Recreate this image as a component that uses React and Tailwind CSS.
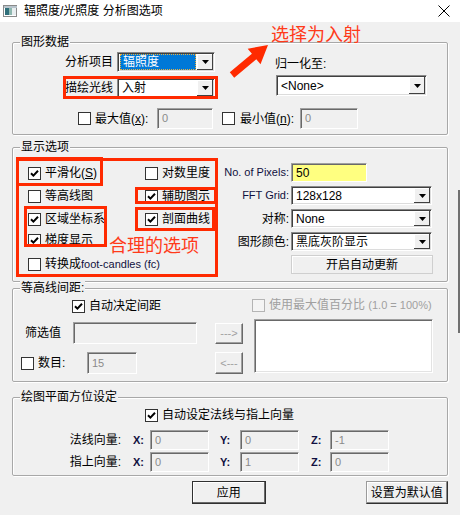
import React from 'react';

const RED = 'border-[#ff2a00]';

const Check = ({ checked, disabled }) => (
  <span
    className={`flex items-center justify-center w-[13px] h-[13px] shrink-0 border ${
      disabled ? 'border-[#b4b4b4] bg-[#f4f4f4]' : 'border-[#333] bg-white'
    }`}
  >
    {checked && (
      <svg width="9" height="9" viewBox="0 0 9 9">
        <path d="M1 4.2 L3.4 6.6 L8 1.8" stroke="#000" strokeWidth="2" fill="none" />
      </svg>
    )}
  </span>
);

const CheckRow = ({ checked, disabled, children, className = '' }) => (
  <div className={`flex items-center h-[16px] ${className}`}>
    <Check checked={checked} disabled={disabled} />
    <span className={`ml-[4px] leading-[16px] whitespace-nowrap ${disabled ? 'text-[#a0a0a0]' : ''}`}>{children}</span>
  </div>
);

const DropBtn = () => (
  <div className="flex items-center justify-center w-[16px] bg-[#f0f0f0] shadow-[inset_-1px_-1px_0_#404040,inset_1px_1px_0_#fff]">
    <svg width="7" height="4" viewBox="0 0 7 4">
      <path d="M0 0 H7 L3.5 4 Z" fill="#000" />
    </svg>
  </div>
);

const Select = ({ value, className = '', hl, latin }) => (
  <div
    className={`flex bg-white border border-[#8a8a8a] border-b-white border-r-white shadow-[inset_1px_1px_0_#404040,inset_-1px_-1px_0_#dcdcdc] p-[1px] ${className}`}
  >
    <div className="flex-1 flex items-center overflow-hidden whitespace-nowrap pl-[1px] pr-[1px]">
      {hl ? (
        <span className="flex items-center h-full w-full bg-[#0078d7] text-white pl-[2px] border border-dotted border-[#e8b040]">
          {value}
        </span>
      ) : (
        <span className={`pl-[2px] ${latin ? 'text-[12px]' : ''}`}>{value}</span>
      )}
    </div>
    <DropBtn />
  </div>
);

const Field = ({ value, className = '', yellow }) => (
  <div
    className={`flex items-center border border-[#a0a0a0] border-b-white border-r-white shadow-[inset_1px_1px_0_#696969] pl-[4px] text-[11px] ${
      yellow ? 'bg-[#ffff80] text-black text-[12px]' : 'bg-[#f0f0f0] text-[#8a8a8a]'
    } ${className}`}
  >
    {value}
  </div>
);

const SmallBtn = ({ children, className = '' }) => (
  <div
    className={`flex items-center justify-center bg-[#f0f0f0] border border-white border-b-[#696969] border-r-[#696969] shadow-[inset_-1px_-1px_0_#a0a0a0] text-[#a0a0a0] text-[11px] ${className}`}
  >
    {children}
  </div>
);

const Group = ({ title, className = '', children }) => (
  <div className={`border border-[#a8a8a8] rounded-[2px] shadow-[inset_1px_1px_0_#fff,1px_1px_0_#fff] ${className}`}>
    <div className="-mt-[9px] ml-[7px] px-[1px] w-fit bg-[#f0f0f0] leading-[16px]">{title}</div>
    {children}
  </div>
);

const Box = ({ className }) => <div className={`absolute border-[3px] ${RED} ${className}`} />;

export default function App() {
  return (
    <div className="relative w-[460px] h-[515px] bg-[#f0f0f0] overflow-hidden text-[12px] text-black font-['Liberation_Sans','Noto_Sans_CJK_SC',sans-serif]">
      {/* title bar */}
      <div className="flex items-center h-[22px] bg-white">
        <svg className="ml-[3px]" width="14" height="12" viewBox="0 0 14 12">
          <rect x="0.5" y="0.5" width="13" height="11" fill="#fff" stroke="#8a8a8a" />
          <rect x="1" y="1" width="13" height="2" fill="#b8c4cc" />
          <rect x="2" y="3" width="4" height="7" fill="#2f6f7a" />
          <rect x="6" y="3" width="3" height="7" fill="#8fb8b0" />
          <rect x="9" y="3" width="4" height="7" fill="#e8eef0" />
        </svg>
        <span className="ml-[7px] leading-[16px]">辐照度/光照度 分析图选项</span>
        <svg className="ml-auto mr-[10px]" width="12" height="12" viewBox="0 0 12 12">
          <path d="M0.5 0.5 L11.5 11.5 M11.5 0.5 L0.5 11.5" stroke="#000" strokeWidth="1" />
        </svg>
      </div>

      <div className="px-[12px]">
        {/* 图形数据 */}
        <Group title="图形数据" className="mt-[20px] h-[93px]">
          <div className="flex mt-[2px]">
            <div className="w-[203px]">
              <div className="flex items-center h-[20px]">
                <span className="w-[100px] text-right">分析项目</span>
                <Select value="辐照度" hl className="ml-[4px] w-[98px] h-[20px]" />
              </div>
              <div className="flex items-center h-[20px] mt-[6px]">
                <span className="w-[100px] text-right">描绘光线</span>
                <Select value="入射" className="ml-[4px] w-[98px] h-[20px]" />
              </div>
            </div>
            <div className="ml-[59px]">
              <div className="mt-[4px] leading-[16px]">归一化至:</div>
              <Select value="<None>" latin className="mt-[3px] ml-[1px] w-[151px] h-[21px]" />
            </div>
          </div>
          <div className="flex items-center h-[21px] mt-[10px] pl-[65px]">
            <Check />
            <span className="ml-[4px] w-[58px] whitespace-nowrap">
              最大值(<u>x</u>):
            </span>
            <Field value="0" className="ml-[4px] w-[56px] h-[21px]" />
            <span className="ml-[9px]" />
            <Check />
            <span className="ml-[5px] w-[56px] whitespace-nowrap">
              最小值(<u>n</u>):
            </span>
            <Field value="0" className="ml-[4px] w-[58px] h-[21px]" />
          </div>
        </Group>

        {/* 显示选项 */}
        <Group title="显示选项" className="mt-[12px] h-[135px]">
          <div className="flex">
            <div className="w-[200px] pl-[15px] mt-[10px]">
              <div className="flex">
                <CheckRow checked className="w-[117px]">
                  平滑化(<u>S</u>)
                </CheckRow>
                <CheckRow>对数里度</CheckRow>
              </div>
              <div className="flex mt-[7px]">
                <CheckRow className="w-[117px]">等高线图</CheckRow>
                <CheckRow checked>辅助图示</CheckRow>
              </div>
              <div className="flex mt-[7px]">
                <CheckRow checked className="w-[117px]">
                  区域坐标系
                </CheckRow>
                <CheckRow checked>剖面曲线</CheckRow>
              </div>
              <CheckRow checked className="mt-[5px]">
                梯度显示
              </CheckRow>
              <CheckRow className="mt-[8px]">
                转换成<span className="text-[11px] text-[#101040]">foot-candles (fc)</span>
              </CheckRow>
            </div>
            <div className="grid grid-cols-[76px_auto] gap-x-[2px] gap-y-[4px] mt-[8px] items-center">
              <span className="text-right text-[11px] text-[#101040] whitespace-nowrap">No. of Pixels:</span>
              <Field value="50" yellow className="w-[76px] h-[19px]" />
              <span className="text-right text-[11px] text-[#101040]">FFT Grid:</span>
              <Select value="128x128" latin className="w-[141px] h-[19px]" />
              <span className="text-right">对称:</span>
              <Select value="None" latin className="w-[141px] h-[19px]" />
              <span className="text-right">图形颜色:</span>
              <Select value="黑底灰阶显示" className="w-[141px] h-[19px]" />
              <span />
              <div className="flex items-center justify-center w-[142px] h-[19px] border border-[#cfcfcf] shadow-[inset_1px_1px_0_#fff]">
                开启自动更新
              </div>
            </div>
          </div>
        </Group>

        {/* 等高线间距 */}
        <Group title="等高线间距:" className="mt-[6px] h-[94px]">
          <div className="flex">
            <div className="w-[239px]">
              <CheckRow checked className="mt-[2px] ml-[59px]">
                自动决定间距
              </CheckRow>
              <div className="flex items-center h-[22px] mt-[8px]">
                <span className="w-[60px] pl-[12px]">筛选值</span>
                <Field value="" className="w-[124px] h-[22px]" />
                <SmallBtn className="ml-[18px] w-[28px] h-[21px]">---&gt;</SmallBtn>
              </div>
              <div className="flex items-center h-[22px] mt-[8px]">
                <span className="ml-[8px]" />
                <Check />
                <span className="ml-[4px] w-[49px]">数目:</span>
                <Field value="15" className="w-[50px] h-[22px]" />
                <SmallBtn className="ml-[78px] w-[28px] h-[22px]">&lt;---</SmallBtn>
              </div>
            </div>
            <div>
              <CheckRow disabled className="mt-[1px]">
                使用最大值百分比 <span className="text-[11px]">(1.0 = 100%)</span>
              </CheckRow>
              <div className="mt-[6px] ml-[2px] w-[179px] h-[54px] bg-white border border-[#a0a0a0] border-b-white border-r-white shadow-[inset_1px_1px_0_#696969,inset_-1px_-1px_0_#e3e3e3]" />
            </div>
          </div>
        </Group>

        {/* 绘图平面方位设定 */}
        <Group title="绘图平面方位设定" className="mt-[15px] h-[79px]">
          <CheckRow checked className="mt-[2px] ml-[132px]">
            自动设定法线与指上向量
          </CheckRow>
          {[
            ['法线向量:', '0', '0', '-1', 'mt-[7px]'],
            ['指上向量:', '0', '1', '0', 'mt-[2px]'],
          ].map(([label, x, y, z, mt]) => (
            <div key={label} className={`flex items-center h-[20px] ${mt}`}>
              <span className="w-[108px] text-right">{label}</span>
              <span className="ml-[12px] w-[17px] text-[11px] font-bold text-[#101040]">X:</span>
              <Field value={x} className="w-[59px] h-[20px]" />
              <span className="ml-[11px] w-[20px] text-[11px] font-bold text-[#101040]">Y:</span>
              <Field value={y} className="w-[59px] h-[20px]" />
              <span className="ml-[12px] w-[19px] text-[11px] font-bold text-[#101040]">Z:</span>
              <Field value={z} className="w-[59px] h-[20px]" />
            </div>
          ))}
        </Group>

        {/* buttons */}
        <div className="flex mt-[5px]">
          <div className="flex items-center justify-center ml-[180px] w-[74px] h-[23px] bg-[#f0f0f0] border border-[#303030] shadow-[inset_-1px_-1px_0_#696969,inset_1px_1px_0_#fff]">
            应用
          </div>
          <div className="flex items-center justify-center ml-[100px] w-[83px] h-[23px] bg-[#f0f0f0] border border-[#9a9a9a] border-b-[#303030] border-r-[#303030] shadow-[inset_-1px_-1px_0_#8a8a8a,inset_1px_1px_0_#fff]">
            设置为默认值
          </div>
        </div>
      </div>

      {/* window edge */}
      <div className="absolute left-[458px] top-[190px] w-[2px] h-[143px] bg-[#707070]" />

      {/* annotations */}
      <Box className="left-[63px] top-[76px] w-[155px] h-[23px]" />
      <Box className="left-[16px] top-[158px] w-[202px] h-[119px]" />
      <Box className="left-[16px] top-[157px] w-[87px] h-[29px]" />
      <Box className="left-[135px] top-[187px] w-[82px] h-[17px]" />
      <Box className="left-[24px] top-[206px] w-[83px] h-[41px]" />
      <Box className="left-[135px] top-[207px] w-[80px] h-[24px]" />
      <div className="absolute left-[271px] top-[22px] text-[18px] leading-[22px] text-[#ff3a1a] font-['Noto_Sans_CJK_SC',sans-serif]">
        选择为入射
      </div>
      <div className="absolute left-[109px] top-[233px] text-[18px] leading-[22px] text-[#ff3a1a] font-['Noto_Sans_CJK_SC',sans-serif]">
        合理的选项
      </div>
      <svg className="absolute left-[222px] top-[38px]" width="56" height="52" viewBox="0 0 56 52">
        <polygon
          points="46,7 38.5,26.2 34.3,21.2 12.2,39.7 7.8,34.3 29.9,15.8 25.7,10.8"
          fill="#ff2a00"
        />
      </svg>
    </div>
  );
}
